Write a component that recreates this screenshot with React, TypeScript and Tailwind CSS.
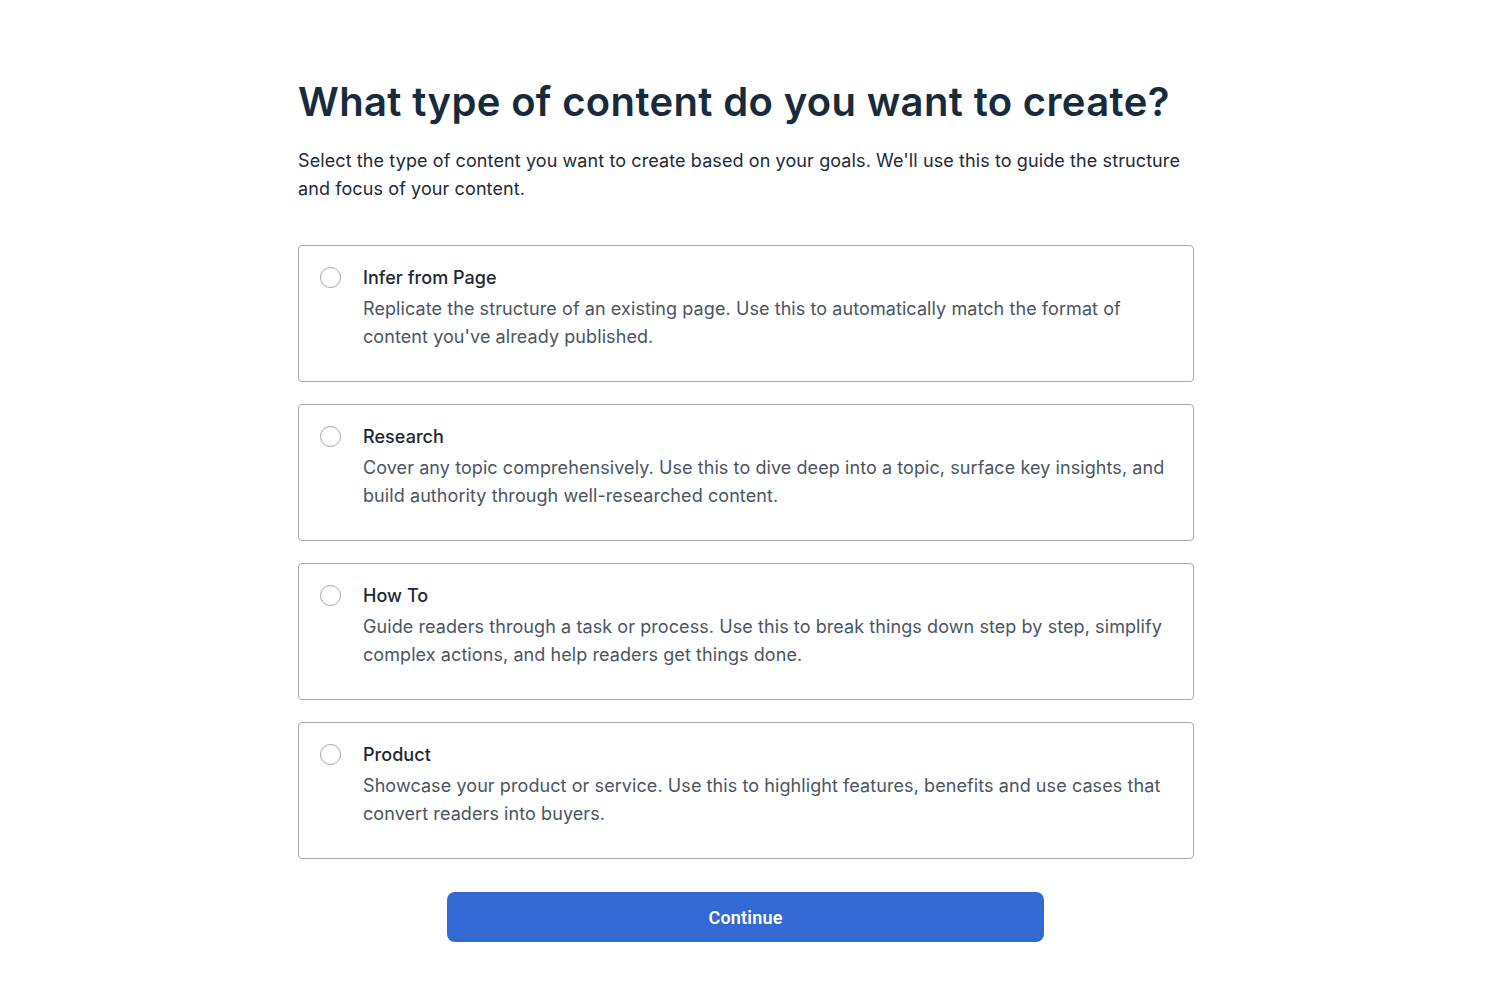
import React from "react";

const options = [
  {
    title: "Infer from Page",
    desc: "Replicate the structure of an existing page. Use this to automatically match the format of content you've already published.",
  },
  {
    title: "Research",
    desc: "Cover any topic comprehensively. Use this to dive deep into a topic, surface key insights, and build authority through well-researched content.",
  },
  {
    title: "How To",
    desc: "Guide readers through a task or process. Use this to break things down step by step, simplify complex actions, and help readers get things done.",
  },
  {
    title: "Product",
    desc: "Showcase your product or service. Use this to highlight features, benefits and use cases that convert readers into buyers.",
  },
];

export default function App() {
  return (
    <div className="min-h-screen bg-white font-['Inter',sans-serif]">
      <div className="w-[896px] ml-[298px] pt-[76px]">
        <h1 className="text-[40px] leading-[52px] font-semibold text-[#172b3d] tracking-[0.35px]">
          What type of content do you want to create?
        </h1>
        <p className="mt-[19px] text-[18px] leading-[28px] text-[#1e2a38] tracking-[0.1px] w-[890px]">
          Select the type of content you want to create based on your goals. We'll use this to guide the structure and focus of your content.
        </p>
        <div className="mt-[42px] flex flex-col gap-[22px]">
          {options.map((o) => (
            <div
              key={o.title}
              className="h-[137px] border border-[#a3a9b1] rounded-[4px] flex pl-[21px] pt-[18px] pr-[24px]"
            >
              <div className="w-[21px] h-[21px] mt-[3px] rounded-full border border-[#a0a6ad] bg-white shrink-0" />
              <div className="ml-[22px]">
                <div className="text-[18px] leading-[28px] font-medium text-[#1d2733] tracking-[0.05px]">{o.title}</div>
                <div className="mt-[3px] text-[18px] leading-[28px] text-[#4b5563] tracking-[0.08px]">{o.desc}</div>
              </div>
            </div>
          ))}
        </div>
        <div className="mt-[33px] flex">
          <button className="ml-[149px] w-[597px] h-[50px] rounded-[8px] bg-[#3469d4] text-white text-[18px] font-semibold font-['Roboto',sans-serif] tracking-[0.2px]">
            Continue
          </button>
        </div>
      </div>
    </div>
  );
}
